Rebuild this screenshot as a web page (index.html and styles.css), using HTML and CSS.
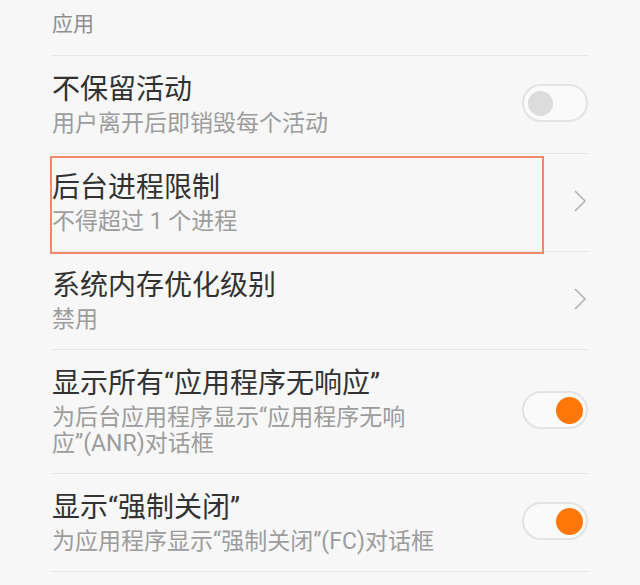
FILE: index.html
```html
<!DOCTYPE html>
<html lang="zh-CN">
<head>
    <meta charset="UTF-8">
    <meta name="viewport" content="width=device-width, initial-scale=1.0">
    <title>开发者选项</title>
    <link rel="stylesheet" href="styles.css">
</head>
<body>
    <div class="settings">
        <div class="section-title">应用</div>

        <div class="item">
            <div class="item-text">
                <div class="item-title">不保留活动</div>
                <div class="item-summary">用户离开后即销毁每个活动</div>
            </div>
            <span class="switch"><span class="knob"></span></span>
        </div>

        <div class="item highlighted">
            <div class="item-text">
                <div class="item-title">后台进程限制</div>
                <div class="item-summary">不得超过 1 个进程</div>
            </div>
            <svg class="arrow" width="14" height="24" viewBox="0 0 14 24">
                <polyline points="2,2 12,12 2,22" fill="none" stroke="#b3b3b3" stroke-width="1.6"/>
            </svg>
        </div>

        <div class="item">
            <div class="item-text">
                <div class="item-title">系统内存优化级别</div>
                <div class="item-summary">禁用</div>
            </div>
            <svg class="arrow" width="14" height="24" viewBox="0 0 14 24">
                <polyline points="2,2 12,12 2,22" fill="none" stroke="#b3b3b3" stroke-width="1.6"/>
            </svg>
        </div>

        <div class="item">
            <div class="item-text">
                <div class="item-title">显示所有“应用程序无响应”</div>
                <div class="item-summary">为后台应用程序显示“应用程序无响<span class="nobr">应”(ANR)</span>对话框</div>
            </div>
            <span class="switch on"><span class="knob"></span></span>
        </div>

        <div class="item">
            <div class="item-text">
                <div class="item-title">显示“强制关闭”</div>
                <div class="item-summary">为应用程序显示“强制关闭”<span class="nobr">(FC)</span>对话框</div>
            </div>
            <span class="switch on"><span class="knob"></span></span>
        </div>
    </div>
</body>
</html>
```

FILE: styles.css
```css
body {
    margin: 0;
    padding: 0;
    background-color: #f7f7f7;
    font-family: Roboto, "Noto Sans CJK SC", sans-serif;
    color: #333;
}
.settings {
    padding: 0 52px;
}
.section-title {
    padding: 8px 0 15px;
    font-size: 21px;
    line-height: 32px;
    color: #8e8e8e;
    border-bottom: 1px solid #e6e6e6;
}
.item {
    position: relative;
    display: flex;
    align-items: center;
    padding: 13px 0 16px;
    border-bottom: 1px solid #e6e6e6;
}
.item-text {
    flex: 1;
    max-width: 400px;
}
.item-title {
    font-size: 28px;
    line-height: 42px;
    color: #323232;
}
.item-summary {
    font-size: 23px;
    line-height: 26px;
    color: #9c9c9c;
}
/* keep the quote and its (ANR)/(FC) tag on one line */
.nobr {
    white-space: nowrap;
}
.arrow {
    margin-left: auto;
    margin-right: 1px;
}
/* orange frame drawn over the selected row */
.highlighted::after {
    content: "";
    position: absolute;
    left: -2px;
    top: 2px;
    width: 490px;
    height: 94px;
    border: 2px solid #ef8a66;
}
.switch {
    position: relative;
    margin-left: auto;
    width: 62px;
    height: 34px;
    border: 2px solid #e3e3e3;
    border-radius: 19px;
    background: #fafafa;
}
.knob {
    position: absolute;
    left: 4px;
    top: 4.5px;
    width: 25px;
    height: 25px;
    border-radius: 50%;
    background: #dcdcdc;
}
.switch.on .knob {
    left: auto;
    right: 3px;
    top: 3.5px;
    width: 27px;
    height: 27px;
    background: #ff7708;
}
```
